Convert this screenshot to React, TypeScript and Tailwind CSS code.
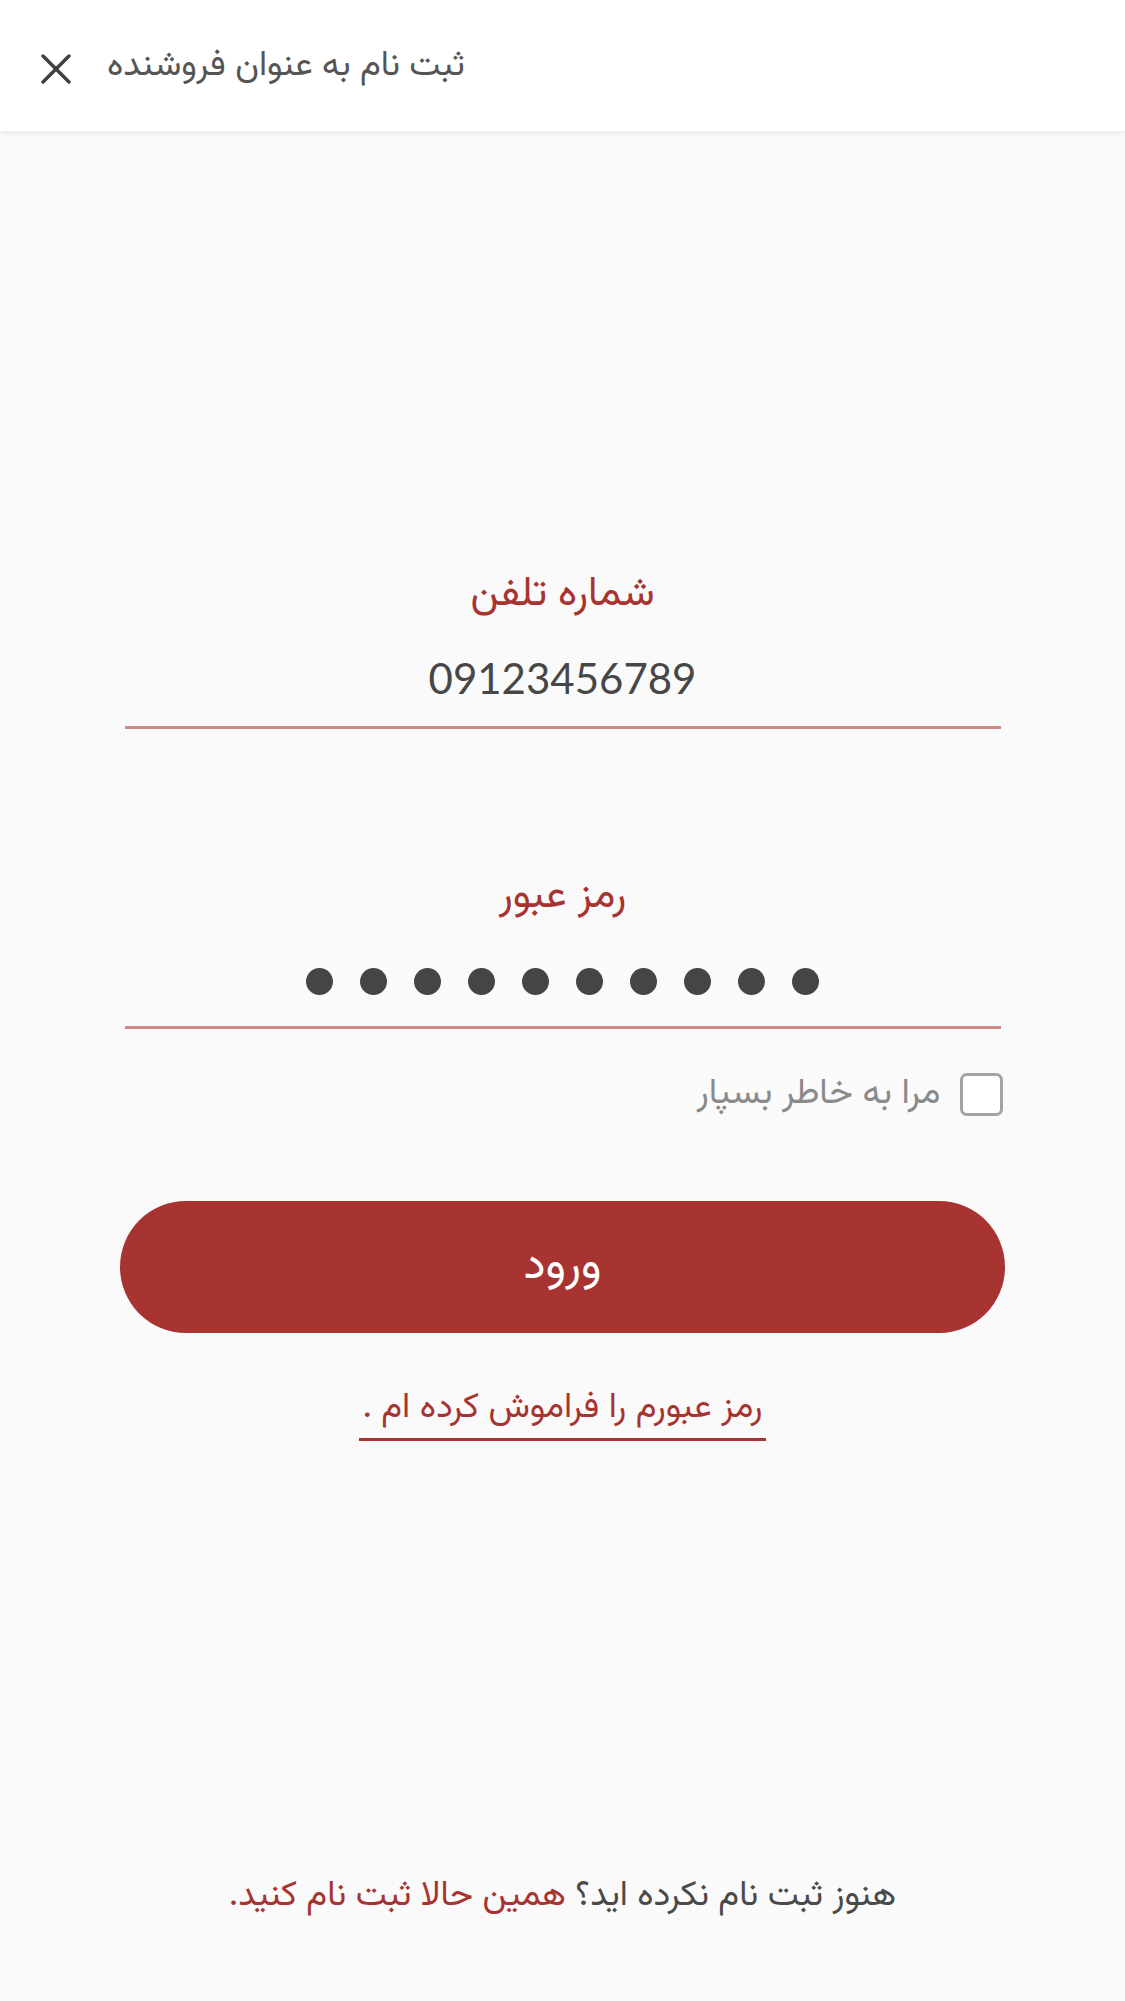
import { useState } from "react";

const fa = "font-['Vazirmatn','Noto_Sans_Arabic','DejaVu_Sans',sans-serif]";

function CloseIcon() {
  return (
    <svg width="30" height="30" viewBox="0 0 30 30" fill="none" aria-hidden>
      <path d="M2 2 L28 28 M28 2 L2 28" stroke="#3f3f3f" strokeWidth="3.4" strokeLinecap="round" />
    </svg>
  );
}

export default function App() {
  const [remember, setRemember] = useState(false);
  const dots = Array.from({ length: 10 });

  return (
    <div className={`min-h-[2001px] w-[1125px] bg-[#fafafa] ${fa}`}>
      {/* header */}
      <header className="flex h-[131px] items-center gap-[36px] bg-white pl-[41px] pt-[6px] shadow-[0_2px_6px_rgba(0,0,0,0.08)]">
        <button type="button" className="flex h-[30px] w-[30px] items-center justify-center">
          <CloseIcon />
        </button>
        <h1 dir="rtl" className="pb-[4px] text-[35px] leading-[44px] text-[#555555]">
          ثبت نام به عنوان فروشنده
        </h1>
      </header>

      <main className="flex flex-col items-center">
        {/* phone */}
        <div className="mt-[439px] w-[876px] text-center">
          <p dir="rtl" className="text-[41px] leading-[50px] text-[#a73431]">
            شماره تلفن
          </p>
          <div className="mt-[30px] border-b-[3px] border-[#d08b88] pb-[20px]">
            <p className="font-['Lato',sans-serif] text-[42px] leading-[56px] text-[#474747]">09123456789</p>
          </div>
        </div>

        {/* password */}
        <div className="mt-[143px] w-[876px] text-center">
          <p dir="rtl" className="text-[41px] leading-[50px] text-[#a73431]">
            رمز عبور
          </p>
          <div className="mt-[46px] flex justify-center gap-[27px] border-b-[3px] border-[#d08b88] pb-[31px]">
            {dots.map((_, i) => (
              <span key={i} className="h-[27px] w-[27px] rounded-full bg-[#454545]" />
            ))}
          </div>
        </div>

        {/* remember */}
        <label dir="rtl" className="mt-[43px] flex w-[880px] cursor-pointer items-center gap-[19px]">
          <input
            type="checkbox"
            checked={remember}
            onChange={() => setRemember(!remember)}
            className="h-[43px] w-[43px] appearance-none rounded-[7px] border-[3px] border-[#a3a3a3] bg-white"
          />
          <span className="text-[36px] leading-[44px] text-[#8a8a8a]">مرا به خاطر بسپار</span>
        </label>

        {/* submit */}
        <button
          type="button"
          className="mt-[85px] flex h-[132px] w-[885px] items-center justify-center rounded-full bg-[#a73431] text-[46px] font-normal text-white"
        >
          ورود
        </button>

        {/* forgot */}
        <a
          dir="rtl"
          href="#"
          className="mt-[54px] border-b-[3px] border-[#a73431] px-[3px] pb-[7px] text-[35px] leading-[44px] text-[#a73431]"
        >
          رمز عبورم را فراموش کرده ام .
        </a>

        {/* sign up */}
        <p dir="rtl" className="mt-[434px] text-[35px] leading-[44px] text-[#4a4a4a]">
          هنوز ثبت نام نکرده اید؟ <span className="text-[#a73431]">همین حالا ثبت نام کنید.</span>
        </p>
      </main>
    </div>
  );
}
